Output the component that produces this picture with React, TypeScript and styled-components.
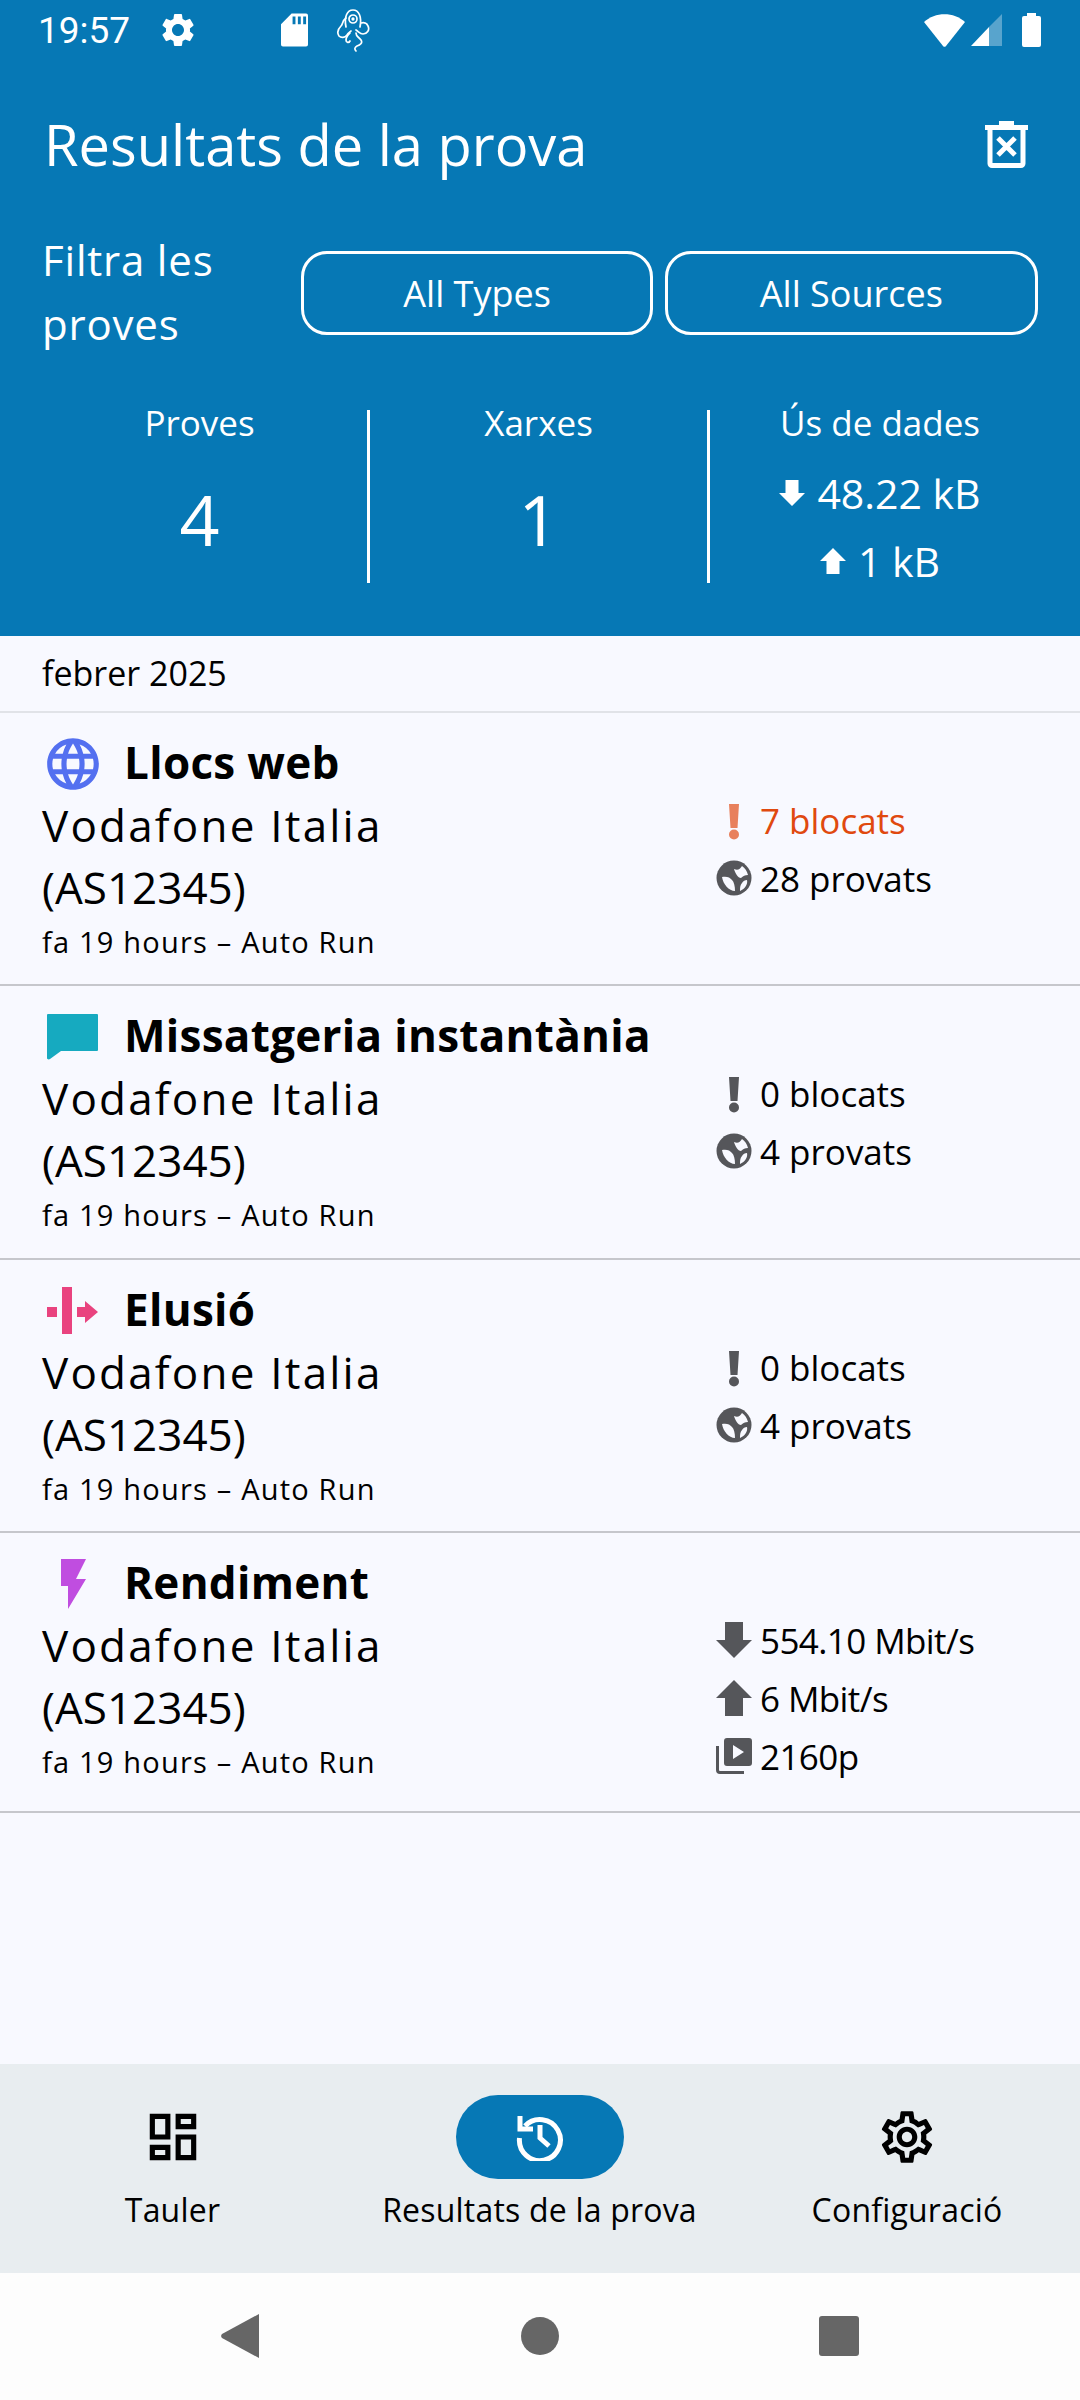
import styled, { createGlobalStyle } from "styled-components";
import { MdOutlineDashboard, MdOutlineSettings, MdSettings, MdLanguage } from "react-icons/md";
import type { ReactNode } from "react";

const BLUE = "#0678b5";
const FONT = `"Open Sans", "Noto Sans", sans-serif`;

const GlobalStyle = createGlobalStyle`
    html, body {
        margin: 0;
        padding: 0;
        background: #f8f9ff;
        font-family: ${FONT};
    }
`;

const Screen = styled.div`
    width: 1080px;
    height: 2400px;
    display: flex;
    flex-direction: column;
    background: #f8f9ff;
    color: #000;
    overflow: hidden;
`;

const Header = styled.header`
    height: 636px;
    flex: none;
    background: ${BLUE};
    color: #fff;
    display: flex;
    flex-direction: column;
`;

const StatusBar = styled.div`
    height: 60px;
    display: flex;
    align-items: center;
    padding: 0 39px 0 38px;
    font-family: Roboto, sans-serif;
    font-size: 37px;
`;

const StatusTime = styled.span`
    width: 92px;
`;

const StatusGear = styled.span`
    display: flex;
    margin: 0 83px 0 28px;
`;

const StatusOctopus = styled.span`
    display: flex;
    margin-left: 28px;
`;

const StatusSpacer = styled.div`
    flex: 1;
`;

const StatusSignal = styled.span`
    display: flex;
    margin: 0 20px 0 6px;
`;

const TitleBar = styled.div`
    height: 168px;
    box-sizing: border-box;
    padding: 0 52px 0 44px;
    display: flex;
    align-items: center;
    justify-content: space-between;
`;

const Title = styled.h1`
    margin: 0;
    font-size: 56px;
    font-weight: 400;
`;

const FilterRow = styled.div`
    display: flex;
    align-items: center;
    padding: 0 42px 0 42px;
    gap: 12px;
`;

const FilterLabel = styled.div`
    width: 248px;
    font-size: 42px;
    letter-spacing: 0.8px;
    line-height: 64px;
`;

const FilterButton = styled.button<{ $w: number }>`
    width: ${(p) => p.$w}px;
    height: 84px;
    margin-top: 2px;
    border: 3px solid #fff;
    border-radius: 26px;
    background: transparent;
    color: #fff;
    font-family: ${FONT};
    font-size: 36px;
`;

const Stats = styled.div`
    display: grid;
    grid-template-columns: 338px 340px 340px;
    grid-template-rows: 173px;
    padding-left: 32px;
    margin-top: 54px;
`;

const Stat = styled.div<{ $border?: boolean }>`
    display: flex;
    flex-direction: column;
    align-items: center;
    height: 173px;
    ${(p) => p.$border && "border-right: 3px solid #fff;"}
`;

const StatLabel = styled.div`
    font-size: 35px;
    line-height: 46px;
    margin-top: -10px;
`;

const StatValue = styled.div`
    font-size: 70px;
    line-height: 90px;
    margin-top: 28px;
`;

const StatData = styled.div`
    margin-top: 13px;
`;

const DataRow = styled.div`
    display: flex;
    align-items: center;
    justify-content: center;
    gap: 12px;
    font-size: 41px;
    line-height: 68px;
`;

const MonthRow = styled.div`
    height: 77px;
    flex: none;
    box-sizing: border-box;
    padding: 0 0 2px 42px;
    display: flex;
    align-items: center;
    font-size: 34px;
    border-bottom: 2px solid #e1e3e8;
`;

const Item = styled.div<{ $h: number }>`
    height: ${(p) => p.$h}px;
    flex: none;
    box-sizing: border-box;
    display: flex;
    padding: 17px 0 0 42px;
    border-bottom: 2px solid #c6c7cc;
`;

const ItemMain = styled.div`
    width: 674px;
`;

const ItemHead = styled.div`
    display: flex;
    align-items: center;
    height: 64px;
`;

const ItemIcon = styled.div`
    width: 84px;
    box-sizing: border-box;
    flex: none;
    display: flex;
    padding: 4px 0 0 5px;
    margin-right: -2px;
`;

const ItemTitle = styled.div`
    font-size: 44px;
    font-weight: 700;
    letter-spacing: 0.3px;
`;

const Network = styled.div`
    font-size: 44px;
    line-height: 62px;
    letter-spacing: 2.2px;
`;

const NetworkCode = styled.span`
    letter-spacing: 0;
`;

const When = styled.div`
    font-size: 29px;
    line-height: 40px;
    letter-spacing: 1.2px;
    margin-top: 4px;
`;

const ItemSide = styled.div`
    padding-top: 61px;
    display: flex;
    flex-direction: column;
`;

const SideRow = styled.div<{ $red?: boolean; $tight?: boolean }>`
    display: flex;
    align-items: center;
    gap: 8px;
    height: 58px;
    font-size: 35px;
    letter-spacing: ${(p) => (p.$tight ? "-0.6px" : "0")};
    color: ${(p) => (p.$red ? "#e0490f" : "#000")};
    svg {
        flex: none;
        color: ${(p) => (p.$red ? "#e8805c" : "#55565a")};
    }
`;

const Fill = styled.div`
    flex: 1;
`;

const BottomNav = styled.nav`
    height: 209px;
    flex: none;
    background: #e8edf0;
    display: grid;
    grid-template-columns: 345px 389px 1fr;
`;

const NavItem = styled.div`
    display: flex;
    flex-direction: column;
    align-items: center;
    padding-top: 31px;
`;

const NavPill = styled.div<{ $active?: boolean }>`
    width: 168px;
    height: 84px;
    border-radius: 42px;
    display: flex;
    align-items: center;
    justify-content: center;
    background: ${(p) => (p.$active ? BLUE : "transparent")};
    color: ${(p) => (p.$active ? "#fff" : "#000")};
`;

const NavLabel = styled.div`
    font-size: 32px;
    letter-spacing: 0.2px;
    line-height: 44px;
    margin-top: 9px;
`;

const SystemBar = styled.div`
    height: 127px;
    flex: none;
    background: #fdfdfd;
    display: flex;
    align-items: center;
    justify-content: center;
    padding-bottom: 2px;
    box-sizing: border-box;
`;

const SysButton = styled.div`
    width: 299px;
    display: flex;
    justify-content: center;
`;

const SdIcon = () => (
    <svg width="27" height="34" viewBox="0 0 28 34" fill="#fff">
        <path fillRule="evenodd" d="M11 0h15a2 2 0 0 1 2 2v30a2 2 0 0 1-2 2H2a2 2 0 0 1-2-2V11zM12 3v8h3V3zM17.500 3v8h3V3zM23 3v8h3V3z" />
    </svg>
);

const OctopusIcon = () => (
    <svg width="34" height="43" viewBox="0 0 34 43" fill="none" stroke="#fff" strokeWidth="1.7" strokeLinecap="round">
        <path d="M10 18C8 8 11 1 17 1s9 7 7 17" />
        <circle cx="17" cy="10" r="4" />
        <circle cx="17" cy="10" r="0.8" />
        <path d="M10 9C6 12 7 15 5 17c-3 3-4 7-2 10 2 2 6 2 8-1 1-2 3-3 4-4" />
        <path d="M25 14c3-1 6 0 7 3 2 4-1 8-5 8-3 0-4-2-7-4" />
        <path d="M14 24c-2 2-4 4-4 7 0 3 3 3 4 1" />
        <path d="M20 24c0 4 3 4 5 7 2 3-1 5-4 6-2 1-3 3-1 5" />
    </svg>
);

const WifiIcon = () => (
    <svg width="41" height="33" viewBox="0 0 41 33" fill="#fff">
        <path d="M0 8C11 -2.500 30 -2.500 41 8L22 32a2 2 0 0 1-3 0z" />
    </svg>
);

const SignalIcon = () => (
    <svg width="31" height="32" viewBox="0 0 31 32">
        <path d="M31 0v32H18V13z" fill="#fff" opacity="0.33" />
        <path d="M0 32L18 13v19z" fill="#fff" />
    </svg>
);

const BatteryIcon = () => (
    <svg width="19" height="34" viewBox="0 0 19 34" fill="#fff">
        <path d="M5 0h9v3h3a2 2 0 0 1 2 2v27a2 2 0 0 1-2 2H2a2 2 0 0 1-2-2V5a2 2 0 0 1 2-2h3z" />
    </svg>
);

const TrashIcon = () => (
    <svg width="43" height="47" viewBox="0 0 43 47" fill="none" stroke="#fff" strokeWidth="5">
        <path d="M0 6.500h43M14 2.500h15" />
        <path d="M5 7v35.500a2 2 0 0 0 2 2h29a2 2 0 0 0 2-2V7" />
        <path d="M13 17l17 17M30 17L13 34" />
    </svg>
);

const ChatIcon = () => (
    <svg width="52" height="46" viewBox="0 0 52 46" fill="#16aac0">
        <path d="M1 0h49a1 1 0 0 1 1 1v35a1 1 0 0 1-1 1H14L3 45c-1 .8-3 .5-3-1V1a1 1 0 0 1 1-1z" />
    </svg>
);

const CircumventionIcon = () => (
    <svg width="52" height="48" viewBox="0 0 52 48" fill="#e9437f">
        <path d="M0 20h10v10H0z" />
        <path d="M15 0h10v47H15z" />
        <path d="M30 20h8v-6l13 11-13 11v-6h-8z" />
    </svg>
);

const BoltIcon = () => (
    <svg width="52" height="50" viewBox="0 0 52 50" fill="#c04de0">
        <path d="M14 0h25l-10 20h10L21 50V27h-7z" />
    </svg>
);

const GlobeIcon = () => (
    <MdLanguage size={62} color="#5470f0" style={{ margin: "-6px 0 -6px -5px" }} />
);

const AlertIcon = () => (
    <svg width="36" height="36" viewBox="0 -2 36 36" overflow="visible" fill="currentColor">
        <path d="M13 0h10l-1.500 24h-7z" />
        <circle cx="18" cy="30.500" r="5" />
    </svg>
);

const EarthIcon = () => (
    <svg width="36" height="36" viewBox="0 0 36 36" fill="currentColor">
        <circle cx="18" cy="18" r="17.500" />
        <path d="M18 9c4 2 6 0 8-3 3 2 5 5 6 9-3 0-5 1-7 3-3 0-6-5-7-9z" fill="#f8f9ff" />
        <path d="M6 17c4-1 8 0 10 3 2 2 3 6 3 11-6 0-12-7-13-14z" fill="#f8f9ff" />
        <path d="M31 20c1 4-2 9-7 11 0-3 0-6 2-8 1-2 3-3 5-3z" fill="#f8f9ff" />
    </svg>
);

const ArrowDownIcon = ({ size = 36 }: { size?: number }) => (
    <svg width={size} height={size} viewBox="0 0 36 36" fill="currentColor">
        <path d="M9 0h18v18h9L18 36 0 18h9z" />
    </svg>
);

const ArrowUpIcon = ({ size = 36 }: { size?: number }) => (
    <svg width={size} height={size} viewBox="0 0 36 36" fill="currentColor">
        <path d="M9 36h18V18h9L18 0 0 18h9z" />
    </svg>
);

const VideoIcon = () => (
    <svg width="36" height="36" viewBox="0 0 36 36" fill="currentColor">
        <path fillRule="evenodd" d="M11 0h22a3 3 0 0 1 3 3v22a3 3 0 0 1-3 3H11a3 3 0 0 1-3-3V3a3 3 0 0 1 3-3zM17 7v14l11-7z" />
        <path d="M1.500 8v24a2.500 2.500 0 0 0 2.500 2.500h24" fill="none" stroke="currentColor" strokeWidth="3" />
    </svg>
);

const HistoryIcon = () => (
    <svg width="48" height="48" viewBox="0 0 48 48" fill="none" stroke="currentColor" strokeWidth="5">
        <path d="M9 13A20.500 20.500 0 1 1 3.500 25" />
        <path d="M4 3v13h13" />
        <path d="M24 12v13l9 8" />
    </svg>
);

const tests: { title: string; icon: ReactNode; side: ReactNode; h: number }[] = [
    {
        title: "Llocs web",
        icon: <GlobeIcon />,
        side: (
            <>
                <SideRow $red><AlertIcon />7 blocats</SideRow>
                <SideRow><EarthIcon />28 provats</SideRow>
            </>
        ),
        h: 273,
    },
    {
        title: "Missatgeria instantània",
        icon: <ChatIcon />,
        side: (
            <>
                <SideRow><AlertIcon />0 blocats</SideRow>
                <SideRow><EarthIcon />4 provats</SideRow>
            </>
        ),
        h: 274,
    },
    {
        title: "Elusió",
        icon: <CircumventionIcon />,
        side: (
            <>
                <SideRow><AlertIcon />0 blocats</SideRow>
                <SideRow><EarthIcon />4 provats</SideRow>
            </>
        ),
        h: 273,
    },
    {
        title: "Rendiment",
        icon: <BoltIcon />,
        side: (
            <>
                <SideRow $tight><ArrowDownIcon />554.10 Mbit/s</SideRow>
                <SideRow $tight><ArrowUpIcon />6 Mbit/s</SideRow>
                <SideRow $tight><VideoIcon />2160p</SideRow>
            </>
        ),
        h: 280,
    },
];

export default () => {
    return (
        <Screen>
            <GlobalStyle />
            <Header>
                <StatusBar>
                    <StatusTime>19:57</StatusTime>
                    <StatusGear><MdSettings size={40} /></StatusGear>
                    <SdIcon />
                    <StatusOctopus><OctopusIcon /></StatusOctopus>
                    <StatusSpacer />
                    <WifiIcon />
                    <StatusSignal><SignalIcon /></StatusSignal>
                    <BatteryIcon />
                </StatusBar>
                <TitleBar>
                    <Title>Resultats de la prova</Title>
                    <TrashIcon />
                </TitleBar>
                <FilterRow>
                    <FilterLabel>Filtra les<br />proves</FilterLabel>
                    <FilterButton $w={352}>All Types</FilterButton>
                    <FilterButton $w={374}>All Sources</FilterButton>
                </FilterRow>
                <Stats>
                    <Stat $border>
                        <StatLabel>Proves</StatLabel>
                        <StatValue>4</StatValue>
                    </Stat>
                    <Stat $border>
                        <StatLabel>Xarxes</StatLabel>
                        <StatValue>1</StatValue>
                    </Stat>
                    <Stat>
                        <StatLabel>Ús de dades</StatLabel>
                        <StatData>
                            <DataRow><ArrowDownIcon size={26} />48.22 kB</DataRow>
                            <DataRow><ArrowUpIcon size={26} />1 kB</DataRow>
                        </StatData>
                    </Stat>
                </Stats>
            </Header>
            <MonthRow>febrer 2025</MonthRow>
            {tests.map((t) => (
                <Item key={t.title} $h={t.h}>
                    <ItemMain>
                        <ItemHead>
                            <ItemIcon>{t.icon}</ItemIcon>
                            <ItemTitle>{t.title}</ItemTitle>
                        </ItemHead>
                        <Network>Vodafone Italia<br /><NetworkCode>(AS12345)</NetworkCode></Network>
                        <When>fa 19 hours – Auto Run</When>
                    </ItemMain>
                    <ItemSide>{t.side}</ItemSide>
                </Item>
            ))}
            <Fill />
            <BottomNav>
                <NavItem>
                    <NavPill><MdOutlineDashboard size={62} /></NavPill>
                    <NavLabel>Tauler</NavLabel>
                </NavItem>
                <NavItem>
                    <NavPill $active><HistoryIcon /></NavPill>
                    <NavLabel>Resultats de la prova</NavLabel>
                </NavItem>
                <NavItem>
                    <NavPill><MdOutlineSettings size={62} /></NavPill>
                    <NavLabel>Configuració</NavLabel>
                </NavItem>
            </BottomNav>
            <SystemBar>
                <SysButton>
                    <svg width="40" height="44" viewBox="0 0 40 44" fill="#666"><path d="M38 0v44L1 24a3 3 0 0 1 0-4z" /></svg>
                </SysButton>
                <SysButton>
                    <svg width="38" height="38" viewBox="0 0 38 38" fill="#666"><circle cx="19" cy="19" r="19" /></svg>
                </SysButton>
                <SysButton>
                    <svg width="40" height="40" viewBox="0 0 40 40" fill="#666"><rect width="40" height="40" rx="3" /></svg>
                </SysButton>
            </SystemBar>
        </Screen>
    );
};
